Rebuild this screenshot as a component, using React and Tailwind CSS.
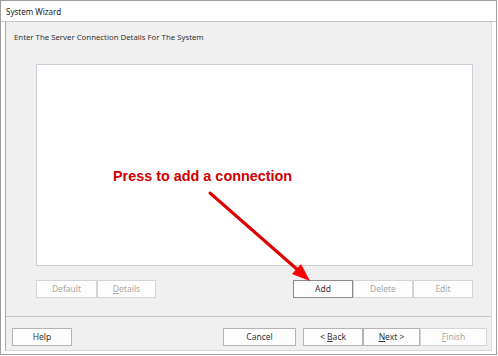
import React from 'react';

const ui = { fontFamily: '"Noto Sans", "Open Sans", sans-serif' };

function Btn({ w, disabled, strong, children }) {
  return (
    <div
      className={`${w} h-[18px] flex items-center justify-center text-[8.5px] bg-[#fdfdfd] border ${
        disabled ? 'border-[#d4d4d4] text-[#a8a8a8]' : strong ? 'border-[#8c8c8c] text-[#333]' : 'border-[#b4b4b4] text-[#333]'
      }`}
    >
      {children}
    </div>
  );
}

export default function App() {
  return (
    <div className="w-[498px] h-[356px] bg-white relative" style={ui}>
      <div className="w-[497px] h-[355px] border border-[#9e9e9e] flex flex-col bg-white">
        <div className="h-[21px] border-b border-[#c8c8c8] flex items-center pl-[5px] pt-[1px] text-[8px] text-[#222]">System Wizard</div>
        <div className="flex-1 px-[4px] pb-[3px] flex">
          <div className="flex-1 flex flex-col bg-[#f0f0f0] border-l border-[#a8a8a8] border-r border-r-[#e0e0e0] border-b border-b-[#d8d8d8]">
            <div className="h-[295px] border-b border-[#c8c8c8] flex flex-col pl-[30px]">
              <div className="pt-[9px] -ml-[22px] text-[7.8px] leading-[12px] text-[#333]">Enter The Server Connection Details For The System</div>
              <div className="mt-[21px] w-[437px] h-[202px] bg-white border border-[#c9ced6]" />
              <div className="mt-[14px] flex w-[437px]">
                <Btn w="w-[61px]" disabled>Default</Btn>
                <Btn w="w-[59px]" disabled><span><u>D</u>etails</span></Btn>
                <div className="flex-1" />
                <Btn w="w-[60px]" strong>Add</Btn>
                <Btn w="w-[60px]" disabled>Delete</Btn>
                <Btn w="w-[60px]" disabled>Edit</Btn>
              </div>
            </div>
            <div className="flex-1 flex pt-[11px] pl-[6px] pr-[4px]">
              <Btn w="w-[60px]">Help</Btn>
              <div className="flex-1" />
              <Btn w="w-[73px]">Cancel</Btn>
              <div className="w-[7px]" />
              <Btn w="w-[60px]"><span>&lt; <u>B</u>ack</span></Btn>
              <Btn w="w-[57px]"><span><u>N</u>ext &gt;</span></Btn>
              <Btn w="w-[67px]" disabled><span><u>F</u>inish</span></Btn>
            </div>
          </div>
        </div>
      </div>

      <div
        className="absolute left-[113px] top-[169px] text-[14.4px] leading-none font-bold text-[#d00000] whitespace-nowrap"
        style={{ fontFamily: '"Liberation Sans", Arial, sans-serif' }}
      >
        Press to add a connection
      </div>
      <svg className="absolute left-0 top-0 pointer-events-none" width="498" height="356">
        <line x1="210" y1="193" x2="299" y2="271" stroke="#e00000" strokeWidth="3" strokeLinecap="round" />
        <polygon points="310,281 292,274 301,264" fill="#ff0000" />
      </svg>
    </div>
  );
}
